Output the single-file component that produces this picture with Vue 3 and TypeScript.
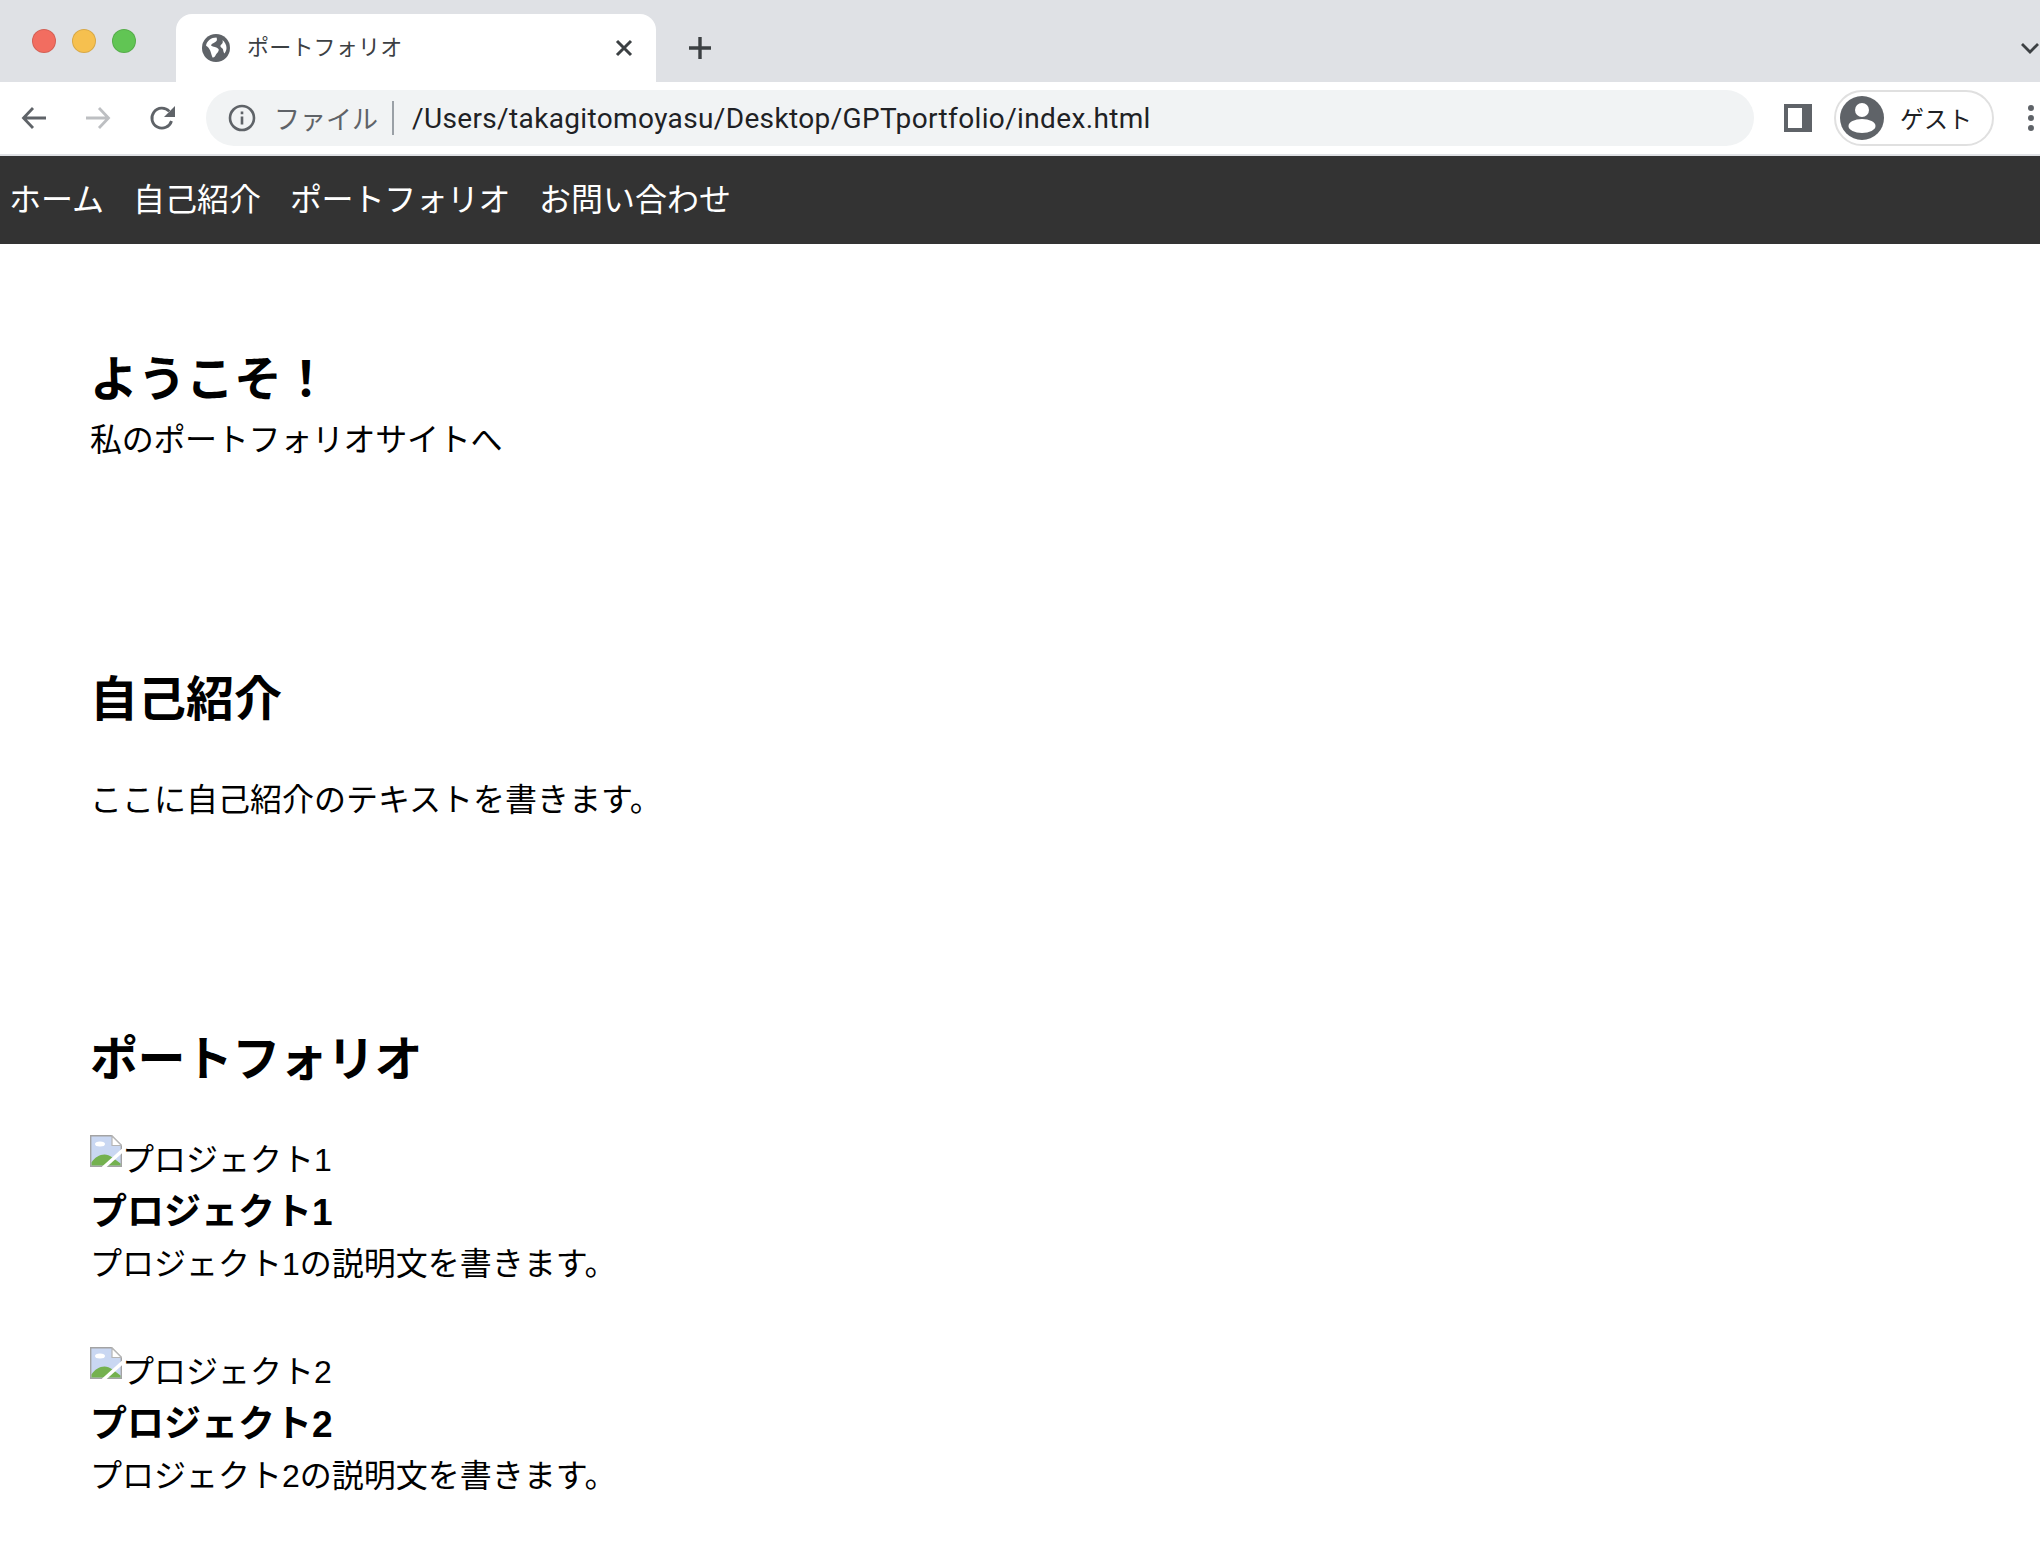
<script setup lang="ts">
const navItems: { label: string; tight: boolean }[] = [
  { label: 'ホーム', tight: false },
  { label: '自己紹介', tight: false },
  { label: 'ポートフォリオ', tight: true },
  { label: 'お問い合わせ', tight: false },
]
const projects: number[] = [1, 2]
</script>

<template>
  <div class="page">
    <header class="chrome">
      <div class="tabstrip">
        <div class="lights">
          <span class="light red"></span>
          <span class="light yellow"></span>
          <span class="light green"></span>
        </div>
        <div class="tab">
          <svg class="globe" viewBox="0 0 28 28" width="28" height="28">
            <circle cx="14" cy="14" r="14" fill="#5f6368" />
            <path d="M4 11.500C5 7 9 3.500 14.500 3.500c1 2 .5 4-2 5-2 1-3 1.500-3.500 3 2 1.500 6 1.500 7.500 3.500 1 2-1.500 4-2.500 5.500-1 2-2 3.500-3.500 3C9 20 9 17 7 14.500c-1-1.500-2-2-3-3z" fill="#fff" />
            <path d="M20.500 6c2.500 2 4 5 4 8 0 2-1 4-2 5.500-1.500-1.500-1-4-2-5-1.500-1-2.500-2-2-3 1-1.500 3-2 2-5.500z" fill="#fff" />
          </svg>
          <span class="tab-title">ポートフォリオ</span>
          <svg class="tab-close" viewBox="0 0 20 20" width="20" height="20">
            <path d="M3 3l14 14M17 3L3 17" stroke="#3c4043" stroke-width="3" fill="none" />
          </svg>
        </div>
        <svg class="new-tab" viewBox="0 0 26 26" width="26" height="26">
          <path d="M13 2v22M2 13h22" stroke="#3c4043" stroke-width="3.400" fill="none" />
        </svg>
        <svg class="chevron" viewBox="0 0 20 14" width="20" height="14">
          <path d="M2 3l8 8 8-8" stroke="#3c4043" stroke-width="2.800" fill="none" />
        </svg>
      </div>
      <div class="toolbar">
        <svg class="tool-icon" viewBox="0 0 28 28" width="28" height="28">
          <path d="M26 14H4M13 4L3.500 14 13 24" stroke="#5f6368" stroke-width="2.800" fill="none" />
        </svg>
        <svg class="tool-icon" viewBox="0 0 28 28" width="28" height="28">
          <path d="M2 14h22M15 4l9.500 10L15 24" stroke="#bdbfc2" stroke-width="2.800" fill="none" />
        </svg>
        <svg class="tool-icon" viewBox="0 0 28 28" width="28" height="28">
          <path d="M23.500 17a10 10 0 1 1-2.200-9.600" stroke="#5f6368" stroke-width="2.800" fill="none" />
          <path d="M27 2v11H16z" fill="#5f6368" />
        </svg>
        <div class="omnibox">
          <svg class="info" viewBox="0 0 28 28" width="28" height="28">
            <circle cx="14" cy="14" r="12" stroke="#5f6368" stroke-width="2.600" fill="none" />
            <path d="M12.700 12.500h2.600v8h-2.600zM12.700 7.500h2.600v2.800h-2.600z" fill="#5f6368" />
          </svg>
          <span class="scheme">ファイル</span>
          <span class="divider"></span>
          <span class="url">/Users/takagitomoyasu/Desktop/GPTportfolio/index.html</span>
        </div>
        <svg class="panel" viewBox="0 0 28 28" width="28" height="28">
          <path d="M0 0h28v28H0zM4 4v20h14V4z" fill="#5f6368" fill-rule="evenodd" />
        </svg>
        <div class="profile">
          <svg viewBox="0 0 44 44" width="44" height="44">
            <circle cx="22" cy="22" r="22" fill="#5f6368" />
            <circle cx="22" cy="14" r="7" fill="#fff" />
            <ellipse cx="22" cy="30" rx="13.500" ry="7" fill="#fff" />
          </svg>
          <span class="guest">ゲスト</span>
        </div>
        <svg class="dots" viewBox="0 0 8 28" width="8" height="28">
          <circle cx="4" cy="4" r="3" fill="#5f6368" />
          <circle cx="4" cy="14" r="3" fill="#5f6368" />
          <circle cx="4" cy="24" r="3" fill="#5f6368" />
        </svg>
      </div>
    </header>

    <nav class="site-nav">
      <a
        v-for="item in navItems"
        :key="item.label"
        class="nav-link"
        :class="{ tight: item.tight }"
      >{{ item.label }}</a>
    </nav>

    <main class="content">
      <section class="section hero">
        <h2>ようこそ！</h2>
        <p class="hero-text">私のポートフォリオサイトへ</p>
      </section>

      <section class="section about">
        <h2>自己紹介</h2>
        <p>ここに自己紹介のテキストを書きます。</p>
      </section>

      <section class="section work">
        <h2 class="tight-title">ポートフォリオ</h2>
        <article v-for="n in projects" :key="n" class="project">
          <div class="broken">
            <svg viewBox="0 0 32 32" width="32" height="32">
              <path d="M.7.7h21l9.600 9.600v21H.7z" fill="#c9d7f2" stroke="#a3a3a3" stroke-width="1.400" />
              <path d="M22 1v9.500h9.500z" fill="#fff" stroke="#b5b5b5" stroke-width="1.200" />
              <ellipse cx="10" cy="9" rx="5" ry="2.500" fill="#fff" />
              <path d="M1.500 30.500v-3c3-5 8-8 13-8 5 0 11 5 16 9v2z" fill="#74b14f" />
              <path d="M13 33L33 15" stroke="#fff" stroke-width="3.500" />
            </svg><span>プロジェクト{{ n }}</span>
          </div>
          <h3>プロジェクト{{ n }}</h3>
          <p>プロジェクト{{ n }}の説明文を書きます。</p>
        </article>
      </section>
    </main>
  </div>
</template>

<style scoped>
.page {
  font-family: "Liberation Sans", "Noto Sans CJK JP", sans-serif;
  color: #000;
  background: #fff;
  height: 1552px;
  overflow: hidden;
}
.chrome {
  font-family: Inter, "Noto Sans CJK JP", sans-serif;
}
.tabstrip {
  height: 82px;
  background: #dfe1e5;
  display: flex;
  position: relative;
}
.lights {
  width: 176px;
  display: flex;
  gap: 16px;
  padding: 29px 0 0 32px;
  box-sizing: border-box;
}
.light {
  width: 24px;
  height: 24px;
  border-radius: 50%;
  box-sizing: border-box;
  border: 1px solid rgba(0, 0, 0, 0.12);
}
.red { background: #f26d60; }
.yellow { background: #f6c04f; }
.green { background: #61c554; }
.tab {
  margin-top: 14px;
  width: 480px;
  height: 68px;
  background: #fff;
  border-radius: 16px 16px 0 0;
  display: flex;
  align-items: center;
  padding: 0 22px 0 26px;
  box-sizing: border-box;
}
.tab-title {
  margin: -6px 0 0 17px;
  flex: 1;
  font-size: 22px;
  letter-spacing: 0.2px;
  color: #3c4043;
}
.new-tab {
  margin: 35px 0 0 31px;
}
.chevron {
  position: absolute;
  right: 0;
  top: 41px;
}
.toolbar {
  height: 72px;
  background: #fff;
  border-bottom: 2px solid #dfe1e5;
  display: flex;
  align-items: center;
  padding-left: 20px;
}
.tool-icon {
  margin-right: 36px;
}
.omnibox {
  margin-left: -6px;
  width: 1548px;
  height: 56px;
  border-radius: 28px;
  background: #f1f3f4;
  display: flex;
  align-items: center;
  padding-left: 22px;
  box-sizing: border-box;
}
.scheme {
  margin: -2px 0 0 18px;
  font-size: 26px;
  color: #5f6368;
}
.divider {
  width: 2px;
  height: 34px;
  background: #9aa0a6;
  margin: 0 18px 0 14px;
}
.url {
  font-size: 28px;
  letter-spacing: 0.36px;
  color: #202124;
  font-family: Roboto, sans-serif;
}
.panel {
  margin-left: 30px;
}
.profile {
  margin-left: 22px;
  width: 160px;
  height: 56px;
  border: 2px solid #e0e0e0;
  border-radius: 28px;
  display: flex;
  align-items: center;
  padding-left: 4px;
  box-sizing: border-box;
}
.guest {
  margin: -2px 0 0 16px;
  font-size: 24px;
  color: #202124;
}
.dots {
  margin-left: 33px;
}
.site-nav {
  height: 88px;
  background: #333;
  display: flex;
  align-items: center;
  gap: 29px;
  padding: 0 9px 6px;
  box-sizing: border-box;
}
.nav-link {
  color: #fff;
  font-size: 32px;
}
.tight {
  letter-spacing: -0.6px;
}
.content {
  padding: 102px 90px 0;
}
.section {
  margin-bottom: 200px;
}
.section:last-child {
  margin-bottom: 0;
}
h2 {
  margin: 0;
  font-size: 48px;
  line-height: 68px;
  font-weight: 700;
}
.tight-title {
  letter-spacing: -0.6px;
}
p {
  margin: 0;
  font-size: 32px;
  line-height: 52px;
}
.hero-text {
  letter-spacing: -0.3px;
}
.about h2, .work h2 {
  margin-bottom: 40px;
}
.project {
  margin-bottom: 56px;
}
.project:last-child {
  margin-bottom: 0;
}
.broken {
  display: flex;
  align-items: center;
  font-size: 32px;
  line-height: 52px;
}
.broken svg {
  margin-top: -18px;
}
h3 {
  margin: 1px 0 -1px;
  font-size: 37px;
  line-height: 52px;
  font-weight: 700;
}
</style>
